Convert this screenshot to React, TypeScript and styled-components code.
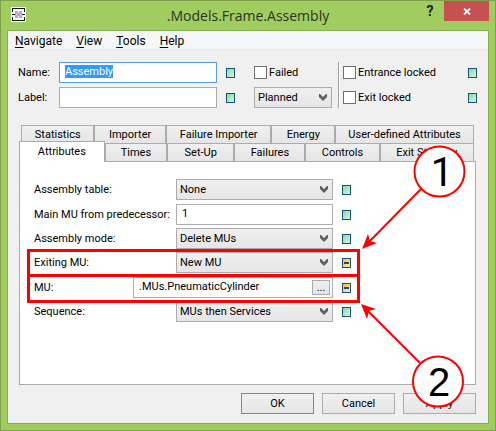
import React from "react";
import styled, { createGlobalStyle } from "styled-components";

const line = "#acacac";
const face = "linear-gradient(#f0f0f0, #e5e5e5)";
const chevron =
  "url(\"data:image/svg+xml,%3Csvg xmlns='http://www.w3.org/2000/svg' width='8' height='7'%3E%3Cpath d='M0 0v3l4 4 4-4V0H7L4 3 1 0z' fill='%23606060'/%3E%3C/svg%3E\")";

const GlobalStyle = createGlobalStyle`
  *, *::before, *::after { box-sizing: border-box; }
  body {
    margin: 0;
    font-family: Roboto, "Noto Sans", sans-serif;
    font-size: 11px;
    line-height: 16px;
    color: #000;
  }
  button, input, select { font: inherit; color: inherit; margin: 0; }
  label { white-space: nowrap; }
`;

const Window = styled.div`
  position: relative;
  display: flex;
  flex-direction: column;
  min-height: 100vh;
  padding: 0 6px 6px;
  background: #a0cd60;
  border: 1px solid #7f9f4d;
`;

const TitleBar = styled.header`
  display: grid;
  grid-template-columns: 80px 1fr 80px;
  height: 29px;
`;

const AppIcon = styled.svg`
  margin: 6px 0 0 4px;
`;

const Title = styled.h1`
  margin: 0;
  padding-top: 5px;
  font-family: "Open Sans", "Noto Sans", sans-serif;
  font-size: 14px;
  line-height: 20px;
  font-weight: 400;
  text-align: center;
  color: #2c341f;
`;

const WindowButtons = styled.div`
  display: flex;
  justify-content: flex-end;
  align-items: flex-start;
`;

const HelpButton = styled.button`
  width: 28px;
  height: 20px;
  padding: 0;
  border: 0;
  background: none;
  font-size: 14px;
  font-weight: 700;
  color: #222;
`;

const CloseButton = styled.button`
  display: flex;
  align-items: center;
  justify-content: center;
  width: 45px;
  height: 20px;
  padding: 0;
  border: 0;
  background: #c75050;
`;

const Client = styled.main`
  flex: 1;
  display: flex;
  flex-direction: column;
  background: #f0f0f0;
  border: 1px solid #88ae52;
`;

const MenuBar = styled.nav`
  display: flex;
  gap: 14px;
  height: 19px;
  padding: 0 7px;
  background: #f5f6f7;
  border-bottom: 1px solid #e8e8e8;
`;

const MenuItem = styled.button`
  padding: 0;
  border: 0;
  background: none;
  font-size: 12px;
  line-height: 20px;
  height: 18px;

  &::first-letter { text-decoration: underline; text-underline-offset: 2px; }
`;

const HeaderForm = styled.section`
  display: grid;
  grid-template-columns: 41px minmax(60px, 158px) 37px 84px 5px 1fr 12px;
  grid-template-rows: 21px 21px;
  row-gap: 4px;
  align-items: center;
  padding: 12px 8px 0 10px;
`;

const HeaderIndicator = styled.span`
  padding-left: 9px;
`;

const Separator = styled.div`
  grid-row: 1 / 3;
  grid-column: 5;
  align-self: stretch;
  width: 2px;
  border-left: 1px solid #a0a0a0;
  border-right: 1px solid #fff;
`;

const CheckLabel = styled.label`
  display: flex;
  align-items: center;
  gap: 2px;
`;

const CheckBox = styled.input`
  appearance: none;
  width: 13px;
  height: 13px;
  background: #fff;
  border: 1px solid #707070;
`;

const TextBox = styled.input<{ $active?: boolean }>`
  width: 100%;
  height: 21px;
  min-width: 0;
  padding: 0 5px 2px;
  background: #fff;
  border: 1px solid ${(p) => (p.$active ? "#569de5" : "#abadb3")};
  outline: 0;

  &::selection { color: #fff; background: #3399ff; }
`;

const Select = styled.select`
  appearance: none;
  width: 100%;
  height: 21px;
  padding: 0 18px 0 3px;
  border: 1px solid ${line};
  border-radius: 0;
  background: ${chevron} no-repeat right 4px center, ${face};
`;

const ShortSelect = styled(Select)`
  width: 78px;
`;

const Swatch = styled.button<{ $set?: boolean }>`
  display: flex;
  align-items: center;
  justify-content: center;
  width: 9px;
  height: 10px;
  padding: 0;
  border: 1px solid #1c4f80;
  background: ${(p) =>
    p.$set
      ? "linear-gradient(135deg, #ffb629, #ffedb8)"
      : "linear-gradient(135deg, #7de0a0, #d3f7de)"};

  &::before {
    content: "";
    width: 5px;
    height: 2px;
    background: ${(p) => (p.$set ? "#1c4f80" : "transparent")};
  }
`;

const Tabs = styled.section`
  display: flex;
  flex-direction: column;
  flex: 1;
  margin: 17px 12px 0 11px;
`;

const TabRow = styled.div`
  display: flex;
  height: 18px;
  padding: 0 2px;
`;

const FrontTabRow = styled(TabRow)`
  padding-left: 0;
`;

const Tab = styled.button<{ $weight: number }>`
  flex: ${(p) => p.$weight} 1 0;
  min-width: 0;
  padding: 0;
  border: 1px solid ${line};
  border-bottom: 0;
  background: ${face};
  line-height: 18px;
  white-space: nowrap;
`;

const ActiveTab = styled(Tab)`
  z-index: 1;
  height: 21px;
  margin-top: -2px;
  background: #fff;
`;

const Panel = styled.div`
  flex: 1;
  min-height: 224px;
  padding: 17px 14px;
  background: #fff;
  border: 1px solid ${line};
`;

const Fields = styled.div`
  display: grid;
  grid-template-rows: 25px 24px 24px 25px 24px 21px;
`;

const Field = styled.div<{ $wide?: boolean }>`
  display: grid;
  grid-template-columns: ${(p) => (p.$wide ? "99px 200px" : "142px 157px")} 9px;
  align-items: center;
  height: 21px;

  & > ${Swatch} { margin-left: 9px; }
`;

const Browse = styled.div`
  display: flex;
  align-items: center;
  height: 21px;
  padding-right: 2px;
  background: #fff;
  border: 1px solid #abadb3;

  ${TextBox} { border: 0; height: 19px; }
`;

const BrowseButton = styled.button`
  flex: none;
  width: 18px;
  height: 15px;
  padding: 0;
  border: 1px solid ${line};
  background: ${face};
  line-height: 10px;
`;

const Footer = styled.footer`
  display: flex;
  justify-content: flex-end;
  gap: 8px;
  padding: 8px 12px 9px;
`;

const Button = styled.button<{ $primary?: boolean }>`
  width: 73px;
  height: 21px;
  padding: 0;
  border: 1px solid ${(p) => (p.$primary ? "#3399ff" : line)};
  background: ${face};
`;

const Callouts = styled.svg`
  position: absolute;
  z-index: 2;
  top: -1px;
  left: -1px;
  pointer-events: none;
`;

const CalloutNumber = styled.text<{ $family: string }>`
  font-family: ${(p) => p.$family}, sans-serif;
  font-size: 40px;
  text-anchor: middle;
`;

const backTabs: [string, number][] = [
  ["Statistics", 73],
  ["Importer", 71],
  ["Failure Importer", 106],
  ["Energy", 63],
  ["User-defined Attributes", 140],
];

const frontTabs: [string, number][] = [
  ["Times", 62],
  ["Set-Up", 67],
  ["Failures", 71],
  ["Controls", 74],
  ["Exit Strategy", 95],
];

function SelectField({ id, label, value, set }: { id: string; label: string; value: string; set?: boolean }) {
  return (
    <Field>
      <label htmlFor={id}>{label}</label>
      <Select id={id}>
        <option>{value}</option>
      </Select>
      <Swatch type="button" $set={set} aria-label={`${label} inheritance`} />
    </Field>
  );
}

export default function App() {
  const nameRef = React.useRef<HTMLInputElement>(null);

  React.useEffect(() => {
    nameRef.current?.focus();
    nameRef.current?.select();
  }, []);

  return (
    <>
      <GlobalStyle />
      <Window>
        <TitleBar>
          <AppIcon width="15" height="15" viewBox="0 0 15 15" shapeRendering="crispEdges" aria-hidden="true">
            <path fill="#fff" d="M0 0h15v15H0z" />
            <path fill="#111" d="M1 1h13v4h-1V2H2v3H1zM1 14h13v-4h-1v3H2v-3H1zM1 7h3v1H1zM11 7h3v1h-3z" />
            <path fill="#a9a9dc" d="M4 4h7v7H4z" />
            <path fill="#fff" d="M7 4h1v2H7zM7 9h1v2H7zM5 7h1v1H5zM9 7h1v1H9z" />
          </AppIcon>
          <Title>.Models.Frame.Assembly</Title>
          <WindowButtons>
            <HelpButton type="button" aria-label="Help">?</HelpButton>
            <CloseButton type="button" aria-label="Close">
              <svg width="8" height="7" viewBox="0 0 8 7" aria-hidden="true">
                <path d="M1 0.500L7 6.500M7 0.500L1 6.500" stroke="#fff" strokeWidth="1.800" />
              </svg>
            </CloseButton>
          </WindowButtons>
        </TitleBar>
        <Client>
          <MenuBar>
            {["Navigate", "View", "Tools", "Help"].map((item) => (
              <MenuItem key={item} type="button">{item}</MenuItem>
            ))}
          </MenuBar>
          <HeaderForm>
            <label htmlFor="name">Name:</label>
            <TextBox id="name" ref={nameRef} defaultValue="Assembly" $active />
            <HeaderIndicator><Swatch type="button" aria-label="Name inheritance" /></HeaderIndicator>
            <CheckLabel><CheckBox type="checkbox" />Failed</CheckLabel>
            <Separator />
            <CheckLabel><CheckBox type="checkbox" />Entrance locked</CheckLabel>
            <Swatch type="button" aria-label="Entrance locked inheritance" />
            <label htmlFor="label">Label:</label>
            <TextBox id="label" />
            <HeaderIndicator><Swatch type="button" aria-label="Label inheritance" /></HeaderIndicator>
            <ShortSelect aria-label="Failure state"><option>Planned</option></ShortSelect>
            <CheckLabel><CheckBox type="checkbox" />Exit locked</CheckLabel>
            <Swatch type="button" aria-label="Exit locked inheritance" />
          </HeaderForm>
          <Tabs>
            <TabRow>
              {backTabs.map(([name, weight]) => <Tab key={name} type="button" $weight={weight}>{name}</Tab>)}
            </TabRow>
            <FrontTabRow>
              <ActiveTab type="button" $weight={86}>Attributes</ActiveTab>
              {frontTabs.map(([name, weight]) => <Tab key={name} type="button" $weight={weight}>{name}</Tab>)}
            </FrontTabRow>
            <Panel>
              <Fields>
                <SelectField id="table" label="Assembly table:" value="None" />
                <Field>
                  <label htmlFor="main-mu">Main MU from predecessor:</label>
                  <TextBox id="main-mu" defaultValue="1" />
                  <Swatch type="button" aria-label="Main MU inheritance" />
                </Field>
                <SelectField id="mode" label="Assembly mode:" value="Delete MUs" />
                <SelectField id="exiting" label="Exiting MU:" value="New MU" set />
                <Field $wide>
                  <label htmlFor="mu">MU:</label>
                  <Browse>
                    <TextBox id="mu" defaultValue=".MUs.PneumaticCylinder" />
                    <BrowseButton type="button" aria-label="Browse">...</BrowseButton>
                  </Browse>
                  <Swatch type="button" $set aria-label="MU inheritance" />
                </Field>
                <SelectField id="sequence" label="Sequence:" value="MUs then Services" />
              </Fields>
            </Panel>
          </Tabs>
          <Footer>
            <Button type="button" $primary>OK</Button>
            <Button type="button">Cancel</Button>
            <Button type="button">Apply</Button>
          </Footer>
        </Client>
        <Callouts width="496" height="431" viewBox="0 0 496 431">
          <g fill="none" stroke="#f00" strokeWidth="3">
            <path d="M28.500 250.500H358.500V301.500H28.500zM28.500 275.500H358.500" />
          </g>
          <g stroke="#f00" strokeWidth="2">
            <path d="M421 189L368 243M420 363L367 310" />
            <circle cx="439.500" cy="171.500" r="25" fill="#fff" />
            <circle cx="438" cy="381.500" r="25" fill="#fff" />
          </g>
          <path fill="#f00" d="M362 249L368 234L370 241L377 243zM361 304L376 309L369 311L367 319z" />
          <CalloutNumber $family="Roboto" x="442" y="186">1</CalloutNumber>
          <CalloutNumber $family="Liberation Sans" x="439" y="396">2</CalloutNumber>
        </Callouts>
      </Window>
    </>
  );
}
